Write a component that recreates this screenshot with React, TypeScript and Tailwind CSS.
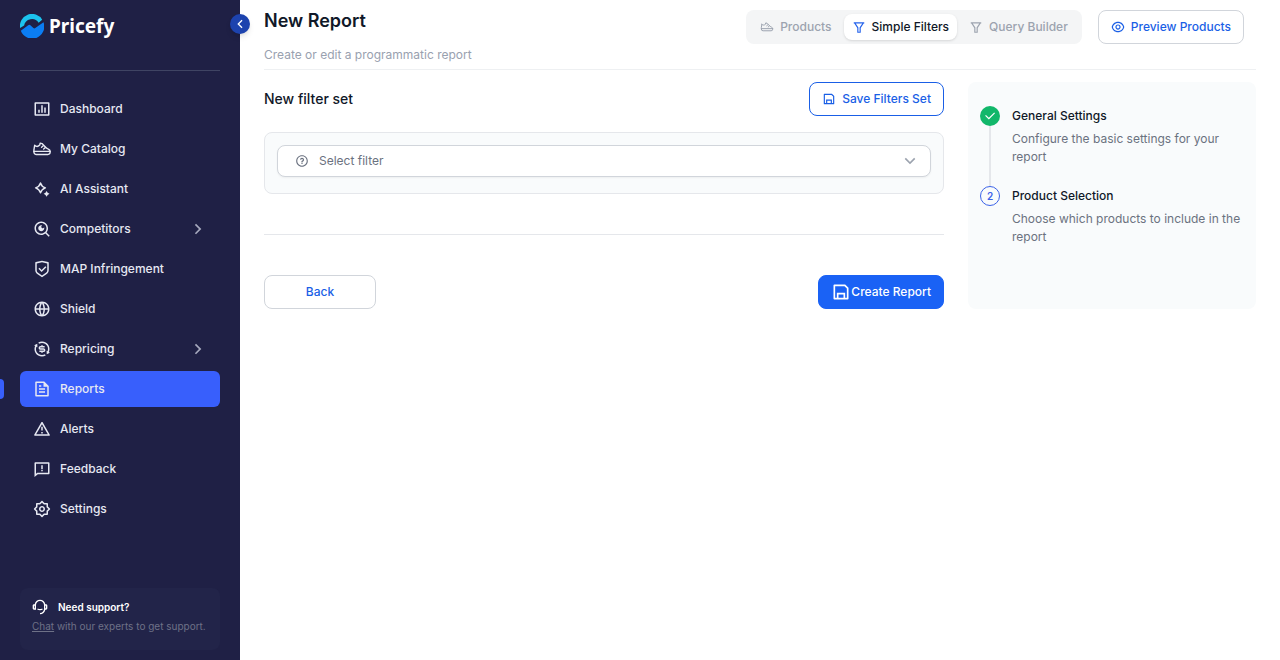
import type { ReactNode } from "react";
import {
  RiAlertLine,
  RiArrowDownSLine,
  RiArrowLeftSLine,
  RiArrowRightSLine,
  RiBarChartBoxLine,
  RiCheckLine,
  RiCustomerService2Line,
  RiExchangeDollarLine,
  RiEyeLine,
  RiFeedbackLine,
  RiFileTextLine,
  RiFilterLine,
  RiGlobalLine,
  RiQuestionLine,
  RiSaveLine,
  RiSearchEyeLine,
  RiSettings2Line,
  RiShieldCheckLine,
} from "react-icons/ri";

function SneakerIcon({ className = "size-5" }: { className?: string }) {
  return (
    <svg viewBox="0 0 24 24" className={className} fill="none" stroke="currentColor" strokeWidth="1.7" strokeLinejoin="round" strokeLinecap="round" aria-hidden="true">
      <path d="M3.200 7.500 2.300 13v2.500a3 3 0 0 0 3 3H19a2.800 2.800 0 0 0 2.800-2.800v-.7c0-1.300-.8-2.200-2-2.700L17.500 11 12 5.500 9.800 5 9.300 7.300C7.500 9 5 9.300 3.200 7.500Z" />
      <path d="M2.300 14.800h19.500M11.500 9.800l2-1.700M14 12l2-1.700" />
    </svg>
  );
}

function SparkleIcon() {
  return (
    <svg viewBox="0 0 24 24" className="size-5" aria-hidden="true">
      <path d="M10.200 4.700Q11.600 9.200 16.100 10.600 11.600 12 10.200 16.500 8.800 12 4.300 10.600 8.800 9.200 10.200 4.700Z" fill="none" stroke="currentColor" strokeWidth="1.700" strokeLinejoin="round" />
      <path d="M17.500 14.300 18.800 16.500 21 17.800 18.800 19.100 17.500 21.300 16.200 19.100 14 17.800 16.200 16.500Z" fill="currentColor" />
    </svg>
  );
}

type Item = { label: string; icon: ReactNode; active?: boolean; expandable?: boolean };

const items: Item[] = [
  { label: "Dashboard", icon: <RiBarChartBoxLine /> },
  { label: "My Catalog", icon: <SneakerIcon /> },
  { label: "AI Assistant", icon: <SparkleIcon /> },
  { label: "Competitors", icon: <RiSearchEyeLine />, expandable: true },
  { label: "MAP Infringement", icon: <RiShieldCheckLine /> },
  { label: "Shield", icon: <RiGlobalLine /> },
  { label: "Repricing", icon: <RiExchangeDollarLine />, expandable: true },
  { label: "Reports", icon: <RiFileTextLine />, active: true },
  { label: "Alerts", icon: <RiAlertLine /> },
  { label: "Feedback", icon: <RiFeedbackLine /> },
  { label: "Settings", icon: <RiSettings2Line /> },
];

function Logo() {
  return (
    <a href="#" className="flex items-center gap-[5px] text-white">
      <svg viewBox="0 0 24 24" className="size-6" aria-hidden="true">
        <path d="M.1 14A12 12 0 0 1 22.200 5.700L18.600 8.700A7.900 7.900 0 0 0 4.100 11.600Z" fill="#1cc3ee" />
        <path d="M.8 16.800 8.200 11.300Q9.300 10.400 10.400 11.300L13.400 14.100Q14.300 14.900 15.300 14.100L23.500 8.300A12 12 0 0 1 .8 16.800Z" fill="#0b7df3" />
      </svg>
      <span className="font-['Noto_Sans',sans-serif] text-[19px] leading-6 font-bold">Pricefy</span>
    </a>
  );
}

function Sidebar() {
  return (
    <aside className="relative flex w-60 shrink-0 flex-col bg-[#1f2045] px-5 text-[#e6e8f2]">
      <div className="border-b border-[#3f4463] pt-3.5 pb-8">
        <Logo />
      </div>
      <button type="button" aria-label="Collapse sidebar" className="absolute top-3.5 -right-2.5 flex size-5 items-center justify-center rounded-full bg-[#1d43ae] text-white shadow-md">
        <RiArrowLeftSLine className="size-4" />
      </button>
      <nav className="mt-5 flex flex-col gap-1">
        {items.map((it) => (
          <a key={it.label} href="#" className={"relative flex h-9 items-center gap-2 rounded-md px-3 text-xs font-medium " + (it.active ? "bg-[#385ffc]" : "")}>
            {it.active && <span className="absolute top-2 -left-5 h-5 w-1 rounded-r bg-[#385ffc]" />}
            <span className="flex size-5 items-center justify-center text-lg">{it.icon}</span>
            <span className="grow">{it.label}</span>
            {it.expandable && <RiArrowRightSLine className="size-5 text-[#a5a8bd]" />}
          </a>
        ))}
      </nav>
      <div className="mt-auto mb-2.5 rounded-lg bg-[#222449] px-3 pt-2.5 pb-4">
        <div className="flex items-center gap-2.5 text-[10px] leading-[18px] font-semibold text-white">
          <RiCustomerService2Line className="size-4" />
          Need support?
        </div>
        <p className="mt-0.5 text-[10px] leading-4 text-[#6e7187]">
          <a href="#" className="underline">Chat</a> with our experts to get support.
        </p>
      </div>
    </aside>
  );
}

const steps = [
  { title: "General Settings", text: "Configure the basic settings for your report", done: true },
  { title: "Product Selection", text: "Choose which products to include in the report", done: false },
];

function Steps() {
  return (
    <aside className="rounded-lg bg-[#f9fbfc] px-3 pt-6">
      <ol>
        {steps.map((s, i) => (
          <li key={s.title} className="flex gap-3">
            <div className="flex shrink-0 flex-col items-center">
              {s.done ? (
                <span className="flex size-5 items-center justify-center rounded-full bg-[#12b76a] text-white">
                  <RiCheckLine className="size-3.5" />
                </span>
              ) : (
                <span className="flex size-5 items-center justify-center rounded-full border border-[#3b62e8] text-[10px] font-semibold text-[#3b62e8]">{i + 1}</span>
              )}
              {i < steps.length - 1 && <span className="w-0.5 grow bg-[#e5e7eb]" />}
            </div>
            <div className="pb-5 text-xs">
              <h3 className="leading-5 font-medium">{s.title}</h3>
              <p className="mt-1 leading-[18px] text-[#6b7280]">{s.text}</p>
            </div>
          </li>
        ))}
      </ol>
    </aside>
  );
}

export default function App() {
  return (
    <div className="flex min-h-screen bg-white font-[Inter,sans-serif] text-[#101828]">
      <Sidebar />
      <main className="min-w-0 grow px-6">
        <header className="flex items-start justify-between border-b border-[#eef0f2] pt-2.5 pr-3 pb-1">
          <div>
            <h1 className="text-lg leading-[22px] font-semibold">New Report</h1>
            <p className="mt-[13px] text-xs leading-5 text-[#99a1af]">Create or edit a programmatic report</p>
          </div>
          <div className="flex items-center gap-4">
            <div className="flex h-[34px] items-center gap-1 rounded-lg bg-[#f4f5f6] px-1.5 text-xs font-medium text-[#9ca3af]">
              <button type="button" className="flex h-[26px] items-center gap-1.5 px-2">
                <SneakerIcon className="size-3.5" />
                Products
              </button>
              <button type="button" className="flex h-[26px] items-center gap-1.5 rounded-lg bg-white px-2 text-[#101828] shadow-sm">
                <RiFilterLine className="size-3.5 text-[#2563eb]" />
                Simple Filters
              </button>
              <button type="button" className="flex h-[26px] items-center gap-1.5 px-2">
                <RiFilterLine className="size-3.5" />
                Query Builder
              </button>
            </div>
            <button type="button" className="flex h-[34px] items-center gap-1.5 rounded-lg border border-[#d1d5db] px-3 text-xs font-medium text-[#1a5fe6]">
              <RiEyeLine className="size-3.5" />
              Preview Products
            </button>
          </div>
        </header>
        <div className="grid grid-cols-[minmax(0,1fr)_288px] gap-6 pt-3">
          <section>
            <div className="flex items-center justify-between">
              <h2 className="text-sm font-medium">New filter set</h2>
              <button type="button" className="flex h-[34px] items-center gap-1.5 rounded-lg border border-[#1a5fe6] px-3 text-xs font-medium text-[#1a5fe6]">
                <RiSaveLine className="size-3.5" />
                Save Filters Set
              </button>
            </div>
            <div className="mt-4 rounded-lg border border-[#e5e7eb] bg-[#f9fbfc] px-3 pt-3 pb-4">
              <button type="button" className="flex h-8 w-full items-center gap-2.5 rounded-lg border border-[#d1d5db] bg-white pr-2.5 pl-[17px] text-left text-xs text-[#6b7280] shadow-xs">
                <RiQuestionLine className="size-3.5" />
                <span className="grow">Select filter</span>
                <RiArrowDownSLine className="size-5 text-[#9ca3af]" />
              </button>
            </div>
            <hr className="my-10 border-[#e5e7eb]" />
            <div className="flex justify-between">
              <button type="button" className="h-[34px] w-28 rounded-lg border border-[#d1d5db] text-xs font-medium text-[#1a5fe6]">Back</button>
              <button type="button" className="flex h-[34px] items-center rounded-lg border border-[#1a62f5] bg-[#1a62f5] px-3 text-xs font-medium text-white">
                <RiSaveLine className="size-5" />
                Create Report
              </button>
            </div>
          </section>
          <Steps />
        </div>
      </main>
    </div>
  );
}
